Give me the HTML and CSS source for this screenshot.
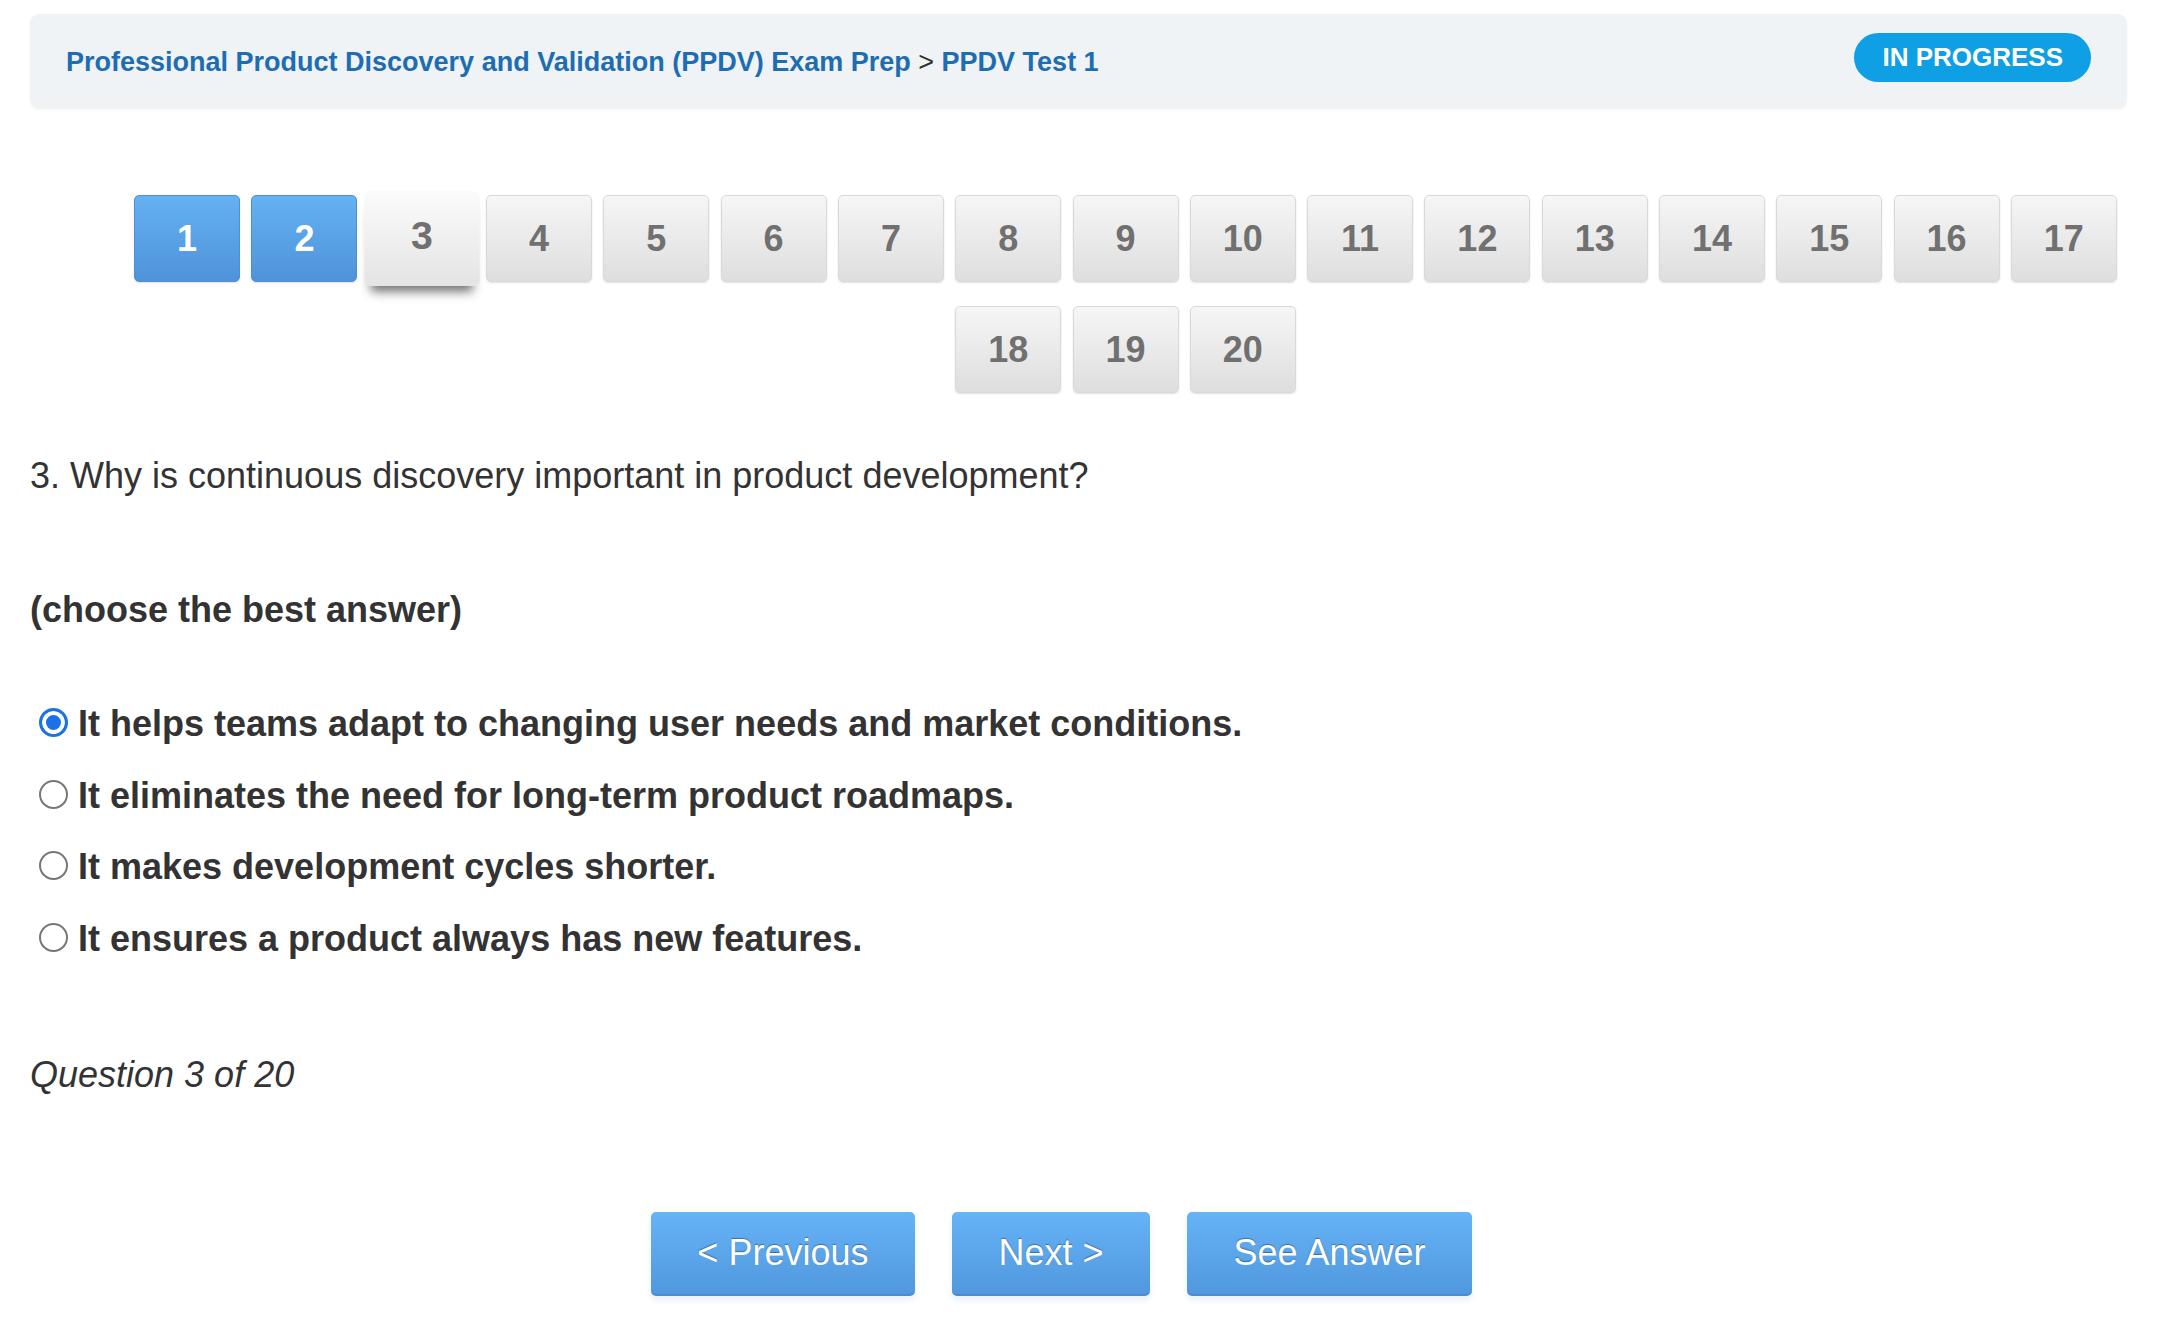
FILE: index.html
```html
<!DOCTYPE html>
<html lang="en">
<head>
  <meta charset="UTF-8" />
  <meta name="viewport" content="width=device-width, initial-scale=1.0"/>
  <title>PPDV Test 1</title>
  <link rel="stylesheet" href="styles.css">
</head>
<body>

  <div class="page">

    <!-- breadcrumb bar -->
    <header class="quiz-header">
      <div class="crumbs">
        <a href="#" class="crumb">Professional Product Discovery and Validation (PPDV) Exam Prep</a>
        <span class="crumb-sep">&gt;</span>
        <a href="#" class="crumb">PPDV Test 1</a>
      </div>
      <span class="status-pill">IN PROGRESS</span>
    </header>

    <!-- question pager -->
    <nav class="pager">
      <a href="#" class="q-btn done">1</a>
      <a href="#" class="q-btn done">2</a>
      <a href="#" class="q-btn current">3</a>
      <a href="#" class="q-btn">4</a>
      <a href="#" class="q-btn">5</a>
      <a href="#" class="q-btn">6</a>
      <a href="#" class="q-btn">7</a>
      <a href="#" class="q-btn">8</a>
      <a href="#" class="q-btn">9</a>
      <a href="#" class="q-btn">10</a>
      <a href="#" class="q-btn">11</a>
      <a href="#" class="q-btn">12</a>
      <a href="#" class="q-btn">13</a>
      <a href="#" class="q-btn">14</a>
      <a href="#" class="q-btn">15</a>
      <a href="#" class="q-btn">16</a>
      <a href="#" class="q-btn">17</a>
      <a href="#" class="q-btn">18</a>
      <a href="#" class="q-btn">19</a>
      <a href="#" class="q-btn">20</a>
    </nav>

    <!-- question -->
    <p class="question">3. Why is continuous discovery important in product development?</p>
    <p class="hint">(choose the best answer)</p>

    <form class="answers">
      <label class="answer">
        <input type="radio" name="answer" checked>
        <span>It helps teams adapt to changing user needs and market conditions.</span>
      </label>
      <label class="answer">
        <input type="radio" name="answer">
        <span>It eliminates the need for long-term product roadmaps.</span>
      </label>
      <label class="answer">
        <input type="radio" name="answer">
        <span>It makes development cycles shorter.</span>
      </label>
      <label class="answer">
        <input type="radio" name="answer">
        <span>It ensures a product always has new features.</span>
      </label>
    </form>

    <p class="counter">Question 3 of 20</p>

    <!-- bottom actions -->
    <div class="actions">
      <a href="#" class="action-btn">&lt; Previous</a>
      <a href="#" class="action-btn">Next &gt;</a>
      <a href="#" class="action-btn">See Answer</a>
    </div>

  </div>

</body>
</html>
```

FILE: styles.css
```css
/* reset */
* {
  margin: 0;
  padding: 0;
  box-sizing: border-box;
}

body {
  background: #fff;
  font-family: "Liberation Sans", Arial, sans-serif;
  color: #333;
}

a {
  text-decoration: none;
}

.page {
  padding: 14px 30px 40px;
}

/* header bar */
.quiz-header {
  display: flex;
  align-items: center;
  justify-content: space-between;
  height: 95px;
  padding: 0 36px;
  background: #f0f3f6;
  border-radius: 9px;
  box-shadow: 0 1px 3px rgba(0,0,0,0.04);
}

.crumbs {
  font-size: 27px;
  font-weight: bold;
  padding-top: 2px;
}

.crumb {
  color: #1d6db3;
}

.crumb-sep {
  color: #333;
  font-weight: normal;
}

.status-pill {
  height: 49px;
  line-height: 48px;
  padding: 0 28px;
  margin-bottom: 9px;
  border-radius: 25px;
  background: #0e9fe4;
  color: #fff;
  font-size: 26px;
  font-weight: bold;
}

/* question pager */
.pager {
  display: flex;
  flex-wrap: wrap;
  justify-content: center;
  gap: 24px 11.3px;
  margin-top: 86px;
  padding-left: 94px;
}

.q-btn {
  display: flex;
  align-items: center;
  justify-content: center;
  width: 106px;
  height: 87px;
  border-radius: 5px;
  border: 1px solid #d9d9d9;
  background: linear-gradient(180deg, #f6f6f6 0%, #dedede 100%);
  box-shadow: 0 1px 2px rgba(0,0,0,0.12);
  color: #707070;
  font-size: 36px;
  font-weight: bold;
}

.q-btn.done {
  border-color: #4b90d8;
  background: linear-gradient(180deg, #65b1f2 0%, #4e93da 100%);
  color: #fff;
}

.q-btn.current {
  border: none;
  padding-bottom: 6px;
  background: linear-gradient(180deg, #fbfbfb 0%, #e4e4e4 100%);
  box-shadow: 0 12px 9px -6px rgba(0,0,0,0.55);
  transform: scale(1.09);
}

/* question text */
.question {
  margin-top: 62px;
  font-size: 36px;
  line-height: 42px;
}

.hint {
  margin-top: 92px;
  font-size: 36px;
  line-height: 42px;
  font-weight: bold;
}

.answers {
  display: flex;
  flex-direction: column;
  gap: 29.5px;
  margin-top: 72px;
}

.answer {
  display: flex;
  align-items: center;
  gap: 10px;
  height: 42px;
  font-size: 36px;
  font-weight: bold;
}

.answer input {
  appearance: none;
  -webkit-appearance: none;
  width: 29px;
  height: 29px;
  margin: 0 0 3px 9px;
  border: 2px solid #777;
  border-radius: 50%;
  background: #fff;
}

.answer input:checked {
  border: 3px solid #1b72e8;
  background: #1b72e8;
  box-shadow: inset 0 0 0 4px #fff;
}

.counter {
  margin-top: 94px;
  font-size: 36px;
  line-height: 42px;
  font-style: italic;
}

/* bottom buttons */
.actions {
  display: flex;
  justify-content: center;
  gap: 37px;
  margin-top: 116px;
  padding-right: 34px;
}

.action-btn {
  display: flex;
  align-items: center;
  height: 84px;
  padding: 0 46.5px;
  border-radius: 5px;
  border-bottom: 2px solid #4a8bd1;
  background: linear-gradient(180deg, #66b3f7 0%, #5198de 100%);
  box-shadow: 0 4px 6px rgba(90,160,230,0.15);
  color: #fff;
  font-size: 36px;
  text-shadow: 0 -1px 1px rgba(0,0,0,0.35);
}
```
